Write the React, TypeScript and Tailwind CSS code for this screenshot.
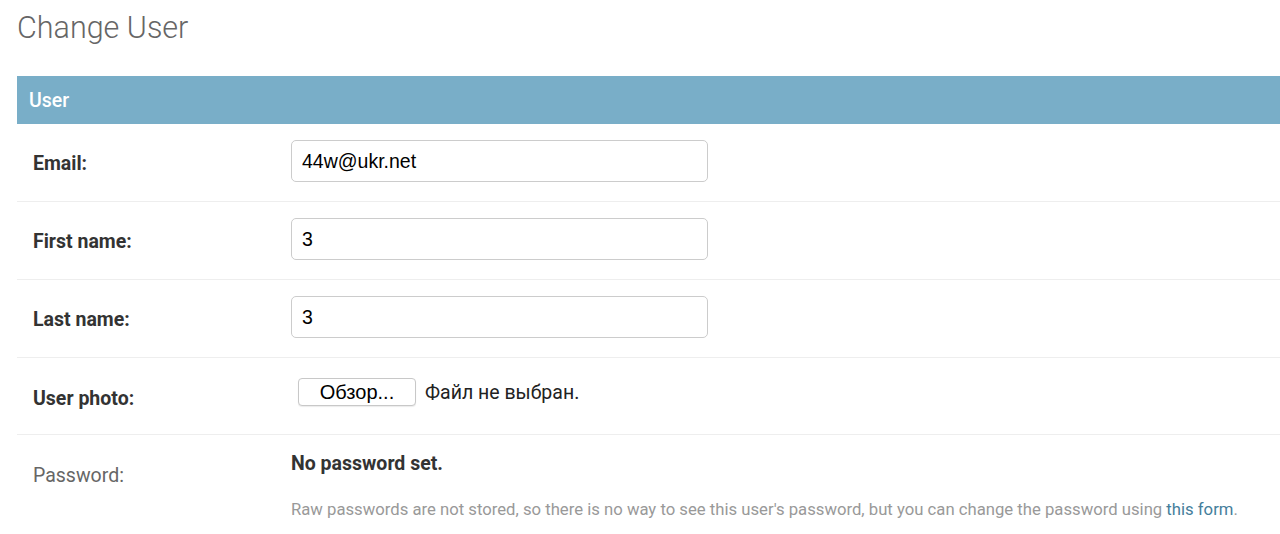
const rows = [
  { label: "Email:", value: "44w@ukr.net" },
  { label: "First name:", value: "3" },
  { label: "Last name:", value: "3" },
];

function TextRow({ label, value }: { label: string; value: string }) {
  return (
    <div className="flex items-center border-b border-[#eeeeee] px-[16px] pt-[16px] pb-[19px]">
      <label className="w-[258px] pt-[5px] text-[19.5px] leading-[26px] font-bold text-[#333333]">{label}</label>
      <input
        type="text"
        defaultValue={value}
        className="h-[42px] w-[417px] rounded-[5px] border border-[#cccccc] px-[10px] text-[19.5px] text-black outline-none"
        style={{ fontFamily: '"Liberation Sans", Arial, sans-serif' }}
      />
    </div>
  );
}

export default function App() {
  return (
    <div className="min-h-screen bg-white pl-[17px]" style={{ fontFamily: "Roboto, sans-serif" }}>
      <h1 className="pt-[9px] pb-[30px] text-[30.5px] leading-[37px] font-light text-[#666666]">Change User</h1>

      <fieldset>
        <h2 className="h-[48px] bg-[#79aec8] px-[12px] pt-[2px] text-[19.5px] leading-[46px] font-medium text-white">
          User
        </h2>

        {rows.map((r) => (
          <TextRow key={r.label} label={r.label} value={r.value} />
        ))}

        <div className="flex items-center border-b border-[#eeeeee] px-[16px] pt-[19px] pb-[22px]">
          <label className="w-[258px] pt-[8px] text-[19.5px] leading-[26px] font-bold text-[#333333]">User photo:</label>
          <div className="mb-[6px] ml-[7px] flex items-center gap-[9px]">
            <button
              type="button"
              className="h-[28px] w-[118px] rounded-[4px] border border-[#c8c8c8] bg-white text-[20px] leading-[26px] text-black shadow-[0_1px_1px_rgba(0,0,0,0.08)]"
              style={{ fontFamily: '"Liberation Sans", Arial, sans-serif' }}
            >
              Обзор...
            </button>
            <span className="pt-[3px] text-[19.5px] leading-[26px] text-[#222222]">Файл не выбран.</span>
          </div>
        </div>

        <div className="flex px-[16px] pt-[16px] pb-[14px]">
          <label className="w-[258px] pt-[12px] text-[19.5px] leading-[26px] text-[#666666]">Password:</label>
          <div>
            <p className="text-[19.5px] leading-[26px] font-bold text-[#333333]">No password set.</p>
            <p className="pt-[22px] text-[16.7px] leading-[22px] text-[#999999]">
              Raw passwords are not stored, so there is no way to see this user's password, but you can change the
              password using <a href="#" className="text-[#447e9b]">this form</a>.
            </p>
          </div>
        </div>
      </fieldset>
    </div>
  );
}
